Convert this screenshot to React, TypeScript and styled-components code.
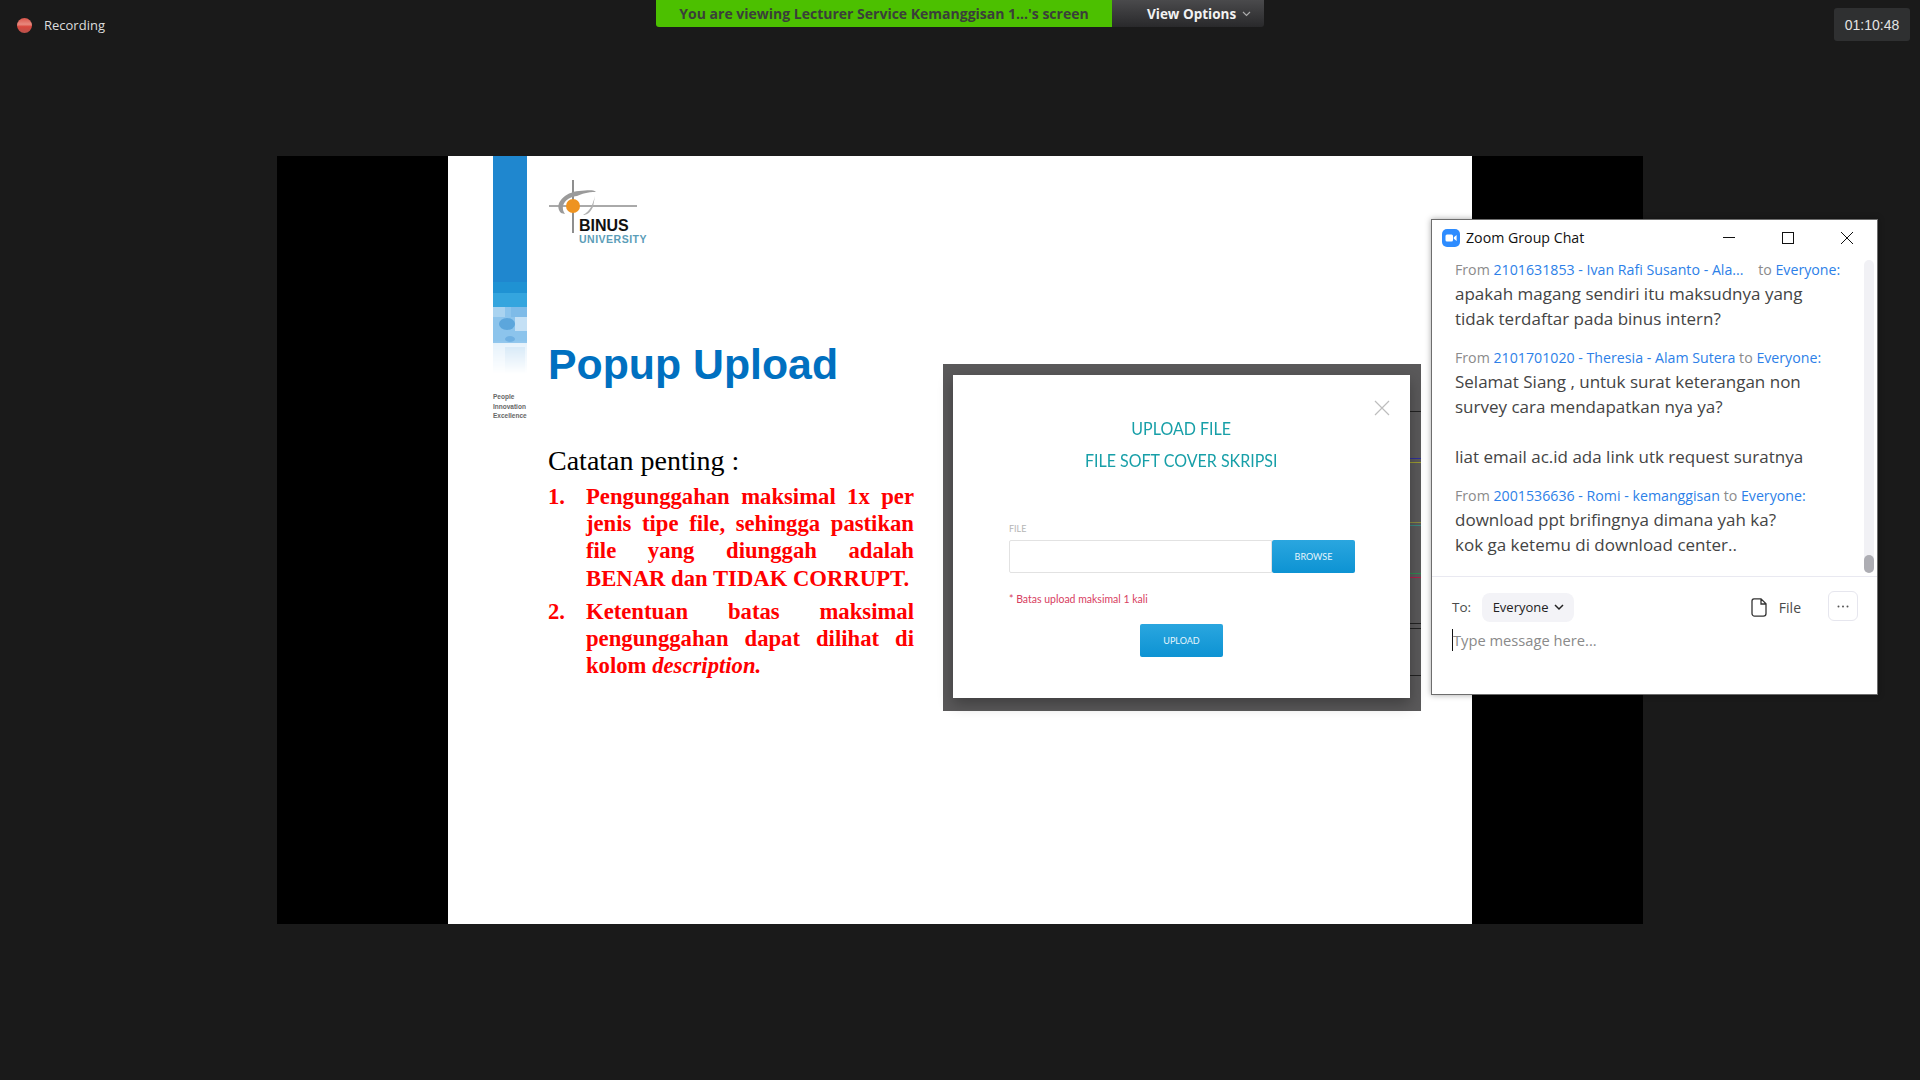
import React from "react";
import styled, { createGlobalStyle } from "styled-components";

const Global = createGlobalStyle`
  html, body { margin: 0; padding: 0; background: #1a1a1a; }
  * { box-sizing: border-box; }
`;

const Page = styled.div`
  position: relative; width: 1920px; height: 1080px; overflow: hidden;
  background: #1a1a1a; display: grid; grid-template-rows: 156px 768px 156px;
  font-family: "Open Sans", sans-serif;
`;
const TopBar = styled.header`
  display: grid; grid-template-columns: 656px 608px 1fr; align-items: start;
`;
const Recording = styled.div`
  display: flex; align-items: center; gap: 12px; height: 50px; padding-left: 17px;
  color: #dcdcdc; font-size: 13px;
`;
const RecDot = styled.span`
  width: 15px; height: 15px; border-radius: 50%;
  background: linear-gradient(#d8544a 0%, #e8897e 42%, #d9483e 58%, #b8524c 100%);
`;
const Banner = styled.div`
  display: flex; height: 27px; border-radius: 0 0 3px 3px; overflow: hidden;
`;
const BannerText = styled.div`
  width: 456px; background: #4cc000; color: #3a3f3a; font-size: 14px; font-weight: 700;
  display: flex; align-items: center; justify-content: center;
`;
const ViewOptions = styled.div`
  flex: 1; background: linear-gradient(#4a4a4c, #29292b); color: #f2f2f2; font-size: 13.5px; font-weight: 700;
  display: flex; align-items: center; gap: 6px; padding-left: 35px;
`;
const TimerWrap = styled.div`
  display: flex; justify-content: flex-end; padding: 8px 10px 0 0;
`;
const Timer = styled.div`
  width: 76px; height: 33px; border-radius: 3px; background: #2f3031; color: #e4e4e4;
  font-size: 14px; display: flex; align-items: center; justify-content: center;
  font-family: "Liberation Sans", sans-serif;
`;

const Stage = styled.main`
  width: 1366px; height: 768px; margin: 0 auto; background: #000; display: flex; justify-content: center;
`;
const Slide = styled.section`
  width: 1024px; height: 768px; background: #fff; display: flex; padding-left: 45px;
`;
const Rail = styled.aside`
  width: 34px; flex: none; display: flex; flex-direction: column;
`;
const RailBlue = styled.div`
  height: 126px; background: #1f87cf;
`;
const RailMid = styled.div`
  height: 25px; background: linear-gradient(#1f92d3 0 45%, #34a5de 45%);
`;
const RailCaption = styled.div`
  margin-top: 18px; font-family: "Liberation Sans", sans-serif; font-size: 6.5px; line-height: 9.5px; color: #666; font-weight: 700;
`;
const Content = styled.div`
  flex: 1; padding-left: 21px; display: flex; flex-direction: column;
`;
const LogoBox = styled.div`
  height: 208px; padding: 21px 0 0 1px;
`;
const LogoWords = styled.div`
  margin: -15px 0 0 30px; font-family: "Liberation Sans", sans-serif; font-weight: 700; display: flex; flex-direction: column;
`;
const LogoBinus = styled.span`
  font-size: 16px; line-height: 15px; color: #111;
`;
const LogoUni = styled.span`
  font-size: 10.5px; line-height: 12px; color: #5b9db8; letter-spacing: 0.5px;
`;
const Columns = styled.div`
  display: flex;
`;
const TextCol = styled.div`
  width: 366px; flex: none; margin-top: -25px;
`;
const SlideTitle = styled.h1`
  margin: 0; font-family: "Liberation Sans", sans-serif; font-size: 42.8px; line-height: 50px; font-weight: 700; color: #0070c0;
`;
const Lead = styled.p`
  margin: 55px 0 0; font-family: "Liberation Serif", serif; font-size: 28px; line-height: 34px; color: #000;
`;
const Notes = styled.ol`
  margin: 5px 0 0; padding: 0; list-style: none; font-family: "Liberation Serif", serif; font-size: 22.7px; font-weight: 700;
  line-height: 27.2px; color: #f00;
`;
const Note = styled.li`
  display: flex; margin-bottom: 6px;
`;
const NoteNum = styled.span`
  width: 38px; flex: none;
`;
const NoteText = styled.span`
  width: 329px; text-align: justify;
`;

const ModalFrame = styled.div`
  position: relative; width: 478px; height: 347px; margin-left: 29px; background: #5a595a; padding: 11px 11px 13px 10px;
`;
const Streak = styled.i<{ $y: number; $c: string }>`
  position: absolute; right: 0; width: 11px; height: 1px; top: ${p => p.$y}px; background: ${p => p.$c};
`;
const Modal = styled.div`
  position: relative; height: 100%; background: #fff; box-shadow: 0 6px 14px rgba(0,0,0,.3);
  display: flex; flex-direction: column; align-items: center; padding-top: 37px;
`;
const CloseMark = styled.svg`
  position: absolute; top: 25px; right: 20px;
`;
const ModalHeading = styled.div`
  font-family: "Lato", sans-serif; color: #179fa8; font-size: 18px; line-height: 32px; text-align: center;
  transform: scaleX(0.89);
`;
const FileLabel = styled.div`
  align-self: stretch; margin: 47px 55px 0 56px; font-family: "Lato", sans-serif; font-size: 9px; line-height: 12px; color: #b5b5b5;
`;
const FileRow = styled.div`
  align-self: stretch; margin: 5px 55px 0 56px; display: flex; height: 33px;
`;
const FileInput = styled.div`
  flex: 1; border: 1px solid #e2e2e2; border-radius: 2px 0 0 2px; background: #fff;
`;
const BlueButton = styled.div<{ $w: number }>`
  width: ${p => p.$w}px; height: 33px; border-radius: 2px; background: linear-gradient(#2aa6df, #0d93d3); color: #e6f5fc;
  font-family: "Lato", sans-serif; font-size: 9px; display: flex; align-items: center; justify-content: center;
`;
const Limit = styled.div`
  align-self: stretch; margin: 18px 55px 0 56px; font-family: "Lato", sans-serif; font-size: 10.5px; line-height: 16px; color: #d8405f;
`;
const UploadWrap = styled.div`
  margin-top: 17px;
`;

const ChatWindow = styled.div`
  position: absolute; left: 1431px; top: 219px; width: 447px; height: 476px; background: #fff;
  border: 1px solid #6d6d6d; display: flex; flex-direction: column; box-shadow: 0 0 6px rgba(0,0,0,.35);
`;
const ChatTitleBar = styled.div`
  height: 38.5px; flex: none; display: flex; align-items: center; padding-left: 10px; padding-bottom: 3px;
  font-size: 14.2px; color: #111;
`;
const ChatTitle = styled.span`
  margin-left: 6px; flex: 1;
`;
const WinButtons = styled.div`
  display: flex; align-items: center; gap: 47px; padding-right: 24px;
`;
const ChatBody = styled.div`
  flex: 1; min-height: 0; display: flex;
`;
const MessageList = styled.div`
  flex: 1; padding-left: 23px; overflow: hidden;
`;
const MsgGroup = styled.div`
  margin-bottom: 16px;
`;
const Meta = styled.div`
  display: flex; font-size: 14.2px; line-height: 22px; color: #8b8b8b; white-space: pre;
`;
const Who = styled.span`
  color: #2d7fe8;
`;
const MetaGap = styled.span`
  display: inline-block; width: 11px;
`;
const MsgText = styled.div`
  font-size: 17px; line-height: 25px; color: #444; min-height: 25px;
`;
const Track = styled.div`
  width: 10px; margin: 1px 3px 3px 0; border-radius: 5px; background: #f1f1f5; display: flex; flex-direction: column; justify-content: flex-end;
`;
const Thumb = styled.div`
  height: 18px; border-radius: 5px; background: #adadb3;
`;
const Composer = styled.div`
  flex: none; height: 118px; border-top: 1px solid #e9e9f1; padding: 15px 19px 0 20px;
`;
const ToRow = styled.div`
  display: flex; align-items: center; height: 30px; font-size: 13.5px; color: #4a4a4a;
`;
const Pill = styled.div`
  margin-left: 11px; width: 92px; height: 29px; border-radius: 8px; background: #f3f3f7; color: #222; display: flex; align-items: center;
  justify-content: center; gap: 5px; font-size: 13px;
`;
const FileAction = styled.div`
  margin-left: auto; display: flex; align-items: center; gap: 12px; color: #4a4a4a; font-size: 14px;
`;
const More = styled.div`
  margin-left: 27px; width: 30px; height: 30px; margin-top: -2px; border: 1px solid #e6e6ee; border-radius: 6px; display: flex; align-items: center; justify-content: center;
`;
const InputLine = styled.div`
  margin-top: 7px; height: 22px; border-left: 1px solid #111; font-size: 14.7px; line-height: 23px; color: #8a8a8a;
`;

const messages = [
  { who: "2101631853 - Ivan Rafi Susanto - Ala...", gap: true, lines: ["apakah magang sendiri itu maksudnya yang", "tidak terdaftar pada binus intern?"] },
  { who: "2101701020 - Theresia - Alam Sutera", gap: false, lines: ["Selamat Siang , untuk surat keterangan non", "survey cara mendapatkan nya ya?", "", "liat email ac.id ada link utk request suratnya"] },
  { who: "2001536636 - Romi - kemanggisan", gap: false, lines: ["download ppt brifingnya dimana yah ka?", "kok ga ketemu di download center.."] },
];

const streaks: [number, string][] = [
  [47, "#222"], [94, "#30309a"], [98, "#9a9a30"], [158, "#8a8a40"], [161, "#3a8a80"],
  [209, "#2f8a50"], [213, "#b0204a"], [259, "#222"], [264, "#222"], [311, "#222"],
];

const Mosaic = () => (
  <svg width="34" height="67" viewBox="0 0 34 67">
    <defs>
      <linearGradient id="fade" x1="0" y1="0" x2="0" y2="1">
        <stop offset="0" stopColor="#fff" stopOpacity="1" />
        <stop offset="0.5" stopColor="#fff" stopOpacity="1" />
        <stop offset="1" stopColor="#fff" stopOpacity="0" />
      </linearGradient>
      <mask id="m"><rect width="34" height="67" fill="url(#fade)" /></mask>
    </defs>
    <g mask="url(#m)">
      <rect width="34" height="36" fill="#8cc4ec" />
      <rect x="0" y="0" width="12" height="10" fill="#a9d3f0" />
      <rect x="18" y="0" width="16" height="10" fill="#7ebbe8" />
      <rect x="22" y="10" width="12" height="14" fill="#c4e0f5" />
      <ellipse cx="14" cy="17" rx="8" ry="6" fill="#5ca6dc" />
      <ellipse cx="17" cy="32" rx="5" ry="3" fill="#6fb0e2" />
      <rect x="0" y="36" width="34" height="31" fill="#e4f1fb" />
      <rect x="12" y="40" width="20" height="27" fill="#cfe5f6" />
    </g>
  </svg>
);

const LogoMark = () => (
  <svg width="96" height="56" viewBox="0 0 96 56" style={{ display: "block" }}>
    <path d="M24 3V56" stroke="#444" strokeWidth="1.2" />
    <path d="M0 29H88" stroke="#555" strokeWidth="1" />
    <path d="M12 36C4 27 16 15 30 14C37 14 43 12 47 15C38 15 33 17 28 19C18 20 10 28 16 37Z" fill="#9a9a9a" />
    <path d="M34 38C42 34 44 26 46 19L44 30C41 36 38 38 34 38Z" fill="#b0b0b0" />
    <circle cx="24" cy="29" r="7" fill="#ee9320" />
  </svg>
);

export default function App() {
  return (
    <Page>
      <Global />
      <TopBar>
        <Recording><RecDot />Recording</Recording>
        <Banner>
          <BannerText>You are viewing Lecturer Service Kemanggisan 1...'s screen</BannerText>
          <ViewOptions>
            View Options
            <svg width="9" height="6" viewBox="0 0 9 6"><path d="M1 1l3.5 3.5L8 1" fill="none" stroke="#aaa" strokeWidth="1.2" /></svg>
          </ViewOptions>
        </Banner>
        <TimerWrap><Timer>01:10:48</Timer></TimerWrap>
      </TopBar>

      <Stage>
        <Slide>
          <Rail>
            <RailBlue />
            <RailMid />
            <Mosaic />
            <RailCaption>People<br />Innovation<br />Excellence</RailCaption>
          </Rail>
          <Content>
            <LogoBox>
              <LogoMark />
              <LogoWords>
                <LogoBinus>BINUS</LogoBinus>
                <LogoUni>UNIVERSITY</LogoUni>
              </LogoWords>
            </LogoBox>
            <Columns>
              <TextCol>
                <SlideTitle>Popup Upload</SlideTitle>
                <Lead>Catatan penting :</Lead>
                <Notes>
                  <Note><NoteNum>1.</NoteNum><NoteText>Pengunggahan maksimal 1x per jenis tipe file, sehingga pastikan file yang diunggah adalah BENAR dan TIDAK CORRUPT.</NoteText></Note>
                  <Note><NoteNum>2.</NoteNum><NoteText>Ketentuan batas maksimal pengunggahan dapat dilihat di kolom <em>description.</em></NoteText></Note>
                </Notes>
              </TextCol>
              <ModalFrame>
                {streaks.map(([y, c]) => <Streak key={y} $y={y} $c={c} />)}
                <Modal>
                  <CloseMark width="16" height="16" viewBox="0 0 16 16">
                    <path d="M1 1l14 14M15 1L1 15" stroke="#bdbdbd" strokeWidth="1.2" fill="none" />
                  </CloseMark>
                  <ModalHeading>UPLOAD FILE<br />FILE SOFT COVER SKRIPSI</ModalHeading>
                  <FileLabel>FILE</FileLabel>
                  <FileRow>
                    <FileInput />
                    <BlueButton $w={83}>BROWSE</BlueButton>
                  </FileRow>
                  <Limit>* Batas upload maksimal 1 kali</Limit>
                  <UploadWrap><BlueButton $w={83}>UPLOAD</BlueButton></UploadWrap>
                </Modal>
              </ModalFrame>
            </Columns>
          </Content>
        </Slide>
      </Stage>

      <ChatWindow>
        <ChatTitleBar>
          <svg width="18" height="18" viewBox="0 0 18 18">
            <rect width="18" height="18" rx="5" fill="#2d8cff" />
            <rect x="3.5" y="5.5" width="7.5" height="7" rx="1.5" fill="#fff" />
            <path d="M11.8 8.2L14.6 6v6l-2.8-2.2z" fill="#fff" />
          </svg>
          <ChatTitle>Zoom Group Chat</ChatTitle>
          <WinButtons>
            <svg width="12" height="12" viewBox="0 0 12 12"><path d="M0 5.5H12" stroke="#111" strokeWidth="1" /></svg>
            <svg width="12" height="12" viewBox="0 0 12 12"><rect x="0.5" y="0.5" width="11" height="11" fill="none" stroke="#111" /></svg>
            <svg width="12" height="12" viewBox="0 0 12 12"><path d="M0 0l12 12M12 0L0 12" stroke="#111" strokeWidth="1" /></svg>
          </WinButtons>
        </ChatTitleBar>
        <ChatBody>
          <MessageList>
            {messages.map(m => (
              <MsgGroup key={m.who}>
                <Meta>From <Who>{m.who}</Who>{m.gap && <MetaGap />} to <Who>Everyone:</Who></Meta>
                {m.lines.map((l, i) => <MsgText key={i}>{l}</MsgText>)}
              </MsgGroup>
            ))}
          </MessageList>
          <Track><Thumb /></Track>
        </ChatBody>
        <Composer>
          <ToRow>
            To:
            <Pill>
              Everyone
              <svg width="10" height="7" viewBox="0 0 10 7"><path d="M1 1l4 4 4-4" fill="none" stroke="#222" strokeWidth="1.5" /></svg>
            </Pill>
            <FileAction>
              <svg width="16" height="19" viewBox="0 0 16 19"><path d="M3 .8h7l5 5V15.5a2.6 2.6 0 0 1-2.6 2.6H3.6A2.6 2.6 0 0 1 1 15.5V3A2.2 2.2 0 0 1 3 .8zM10 .8V6h5" fill="none" stroke="#333" strokeWidth="1.3" /></svg>
              File
            </FileAction>
            <More>
              <svg width="12" height="3" viewBox="0 0 12 3"><circle cx="1.5" cy="1.5" r="1" fill="#555" /><circle cx="6" cy="1.5" r="1" fill="#555" /><circle cx="10.5" cy="1.5" r="1" fill="#555" /></svg>
            </More>
          </ToRow>
          <InputLine>Type message here...</InputLine>
        </Composer>
      </ChatWindow>
    </Page>
  );
}
